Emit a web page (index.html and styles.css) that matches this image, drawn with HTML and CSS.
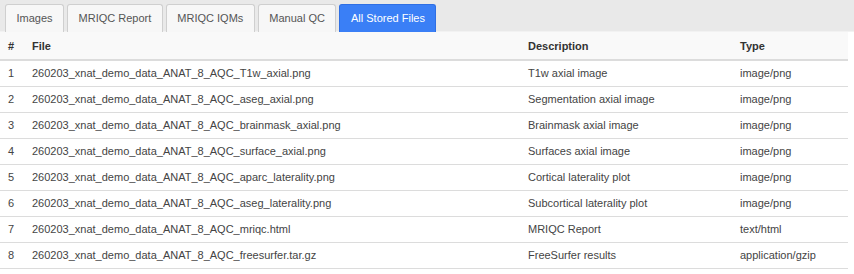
FILE: index.html
```html
<!DOCTYPE html>
<html lang="en">

<head>
    <meta charset="UTF-8">
    <meta name="viewport" content="width=device-width, initial-scale=1.0">
    <title>All Stored Files</title>
    <link rel="stylesheet" href="styles.css">
</head>

<body>

    <div class="tab-bar">
        <div class="tab">Images</div>
        <div class="tab">MRIQC Report</div>
        <div class="tab">MRIQC IQMs</div>
        <div class="tab">Manual QC</div>
        <div class="tab active">All Stored Files</div>
    </div>

    <table class="files-table">
        <colgroup>
            <col class="col-num">
            <col class="col-file">
            <col class="col-desc">
            <col class="col-type">
        </colgroup>
        <thead>
            <tr>
                <th>#</th>
                <th>File</th>
                <th>Description</th>
                <th>Type</th>
            </tr>
        </thead>
        <tbody>
            <tr>
                <td>1</td>
                <td>260203_xnat_demo_data_ANAT_8_AQC_T1w_axial.png</td>
                <td>T1w axial image</td>
                <td>image/png</td>
            </tr>
            <tr>
                <td>2</td>
                <td>260203_xnat_demo_data_ANAT_8_AQC_aseg_axial.png</td>
                <td>Segmentation axial image</td>
                <td>image/png</td>
            </tr>
            <tr>
                <td>3</td>
                <td>260203_xnat_demo_data_ANAT_8_AQC_brainmask_axial.png</td>
                <td>Brainmask axial image</td>
                <td>image/png</td>
            </tr>
            <tr>
                <td>4</td>
                <td>260203_xnat_demo_data_ANAT_8_AQC_surface_axial.png</td>
                <td>Surfaces axial image</td>
                <td>image/png</td>
            </tr>
            <tr>
                <td>5</td>
                <td>260203_xnat_demo_data_ANAT_8_AQC_aparc_laterality.png</td>
                <td>Cortical laterality plot</td>
                <td>image/png</td>
            </tr>
            <tr>
                <td>6</td>
                <td>260203_xnat_demo_data_ANAT_8_AQC_aseg_laterality.png</td>
                <td>Subcortical laterality plot</td>
                <td>image/png</td>
            </tr>
            <tr>
                <td>7</td>
                <td>260203_xnat_demo_data_ANAT_8_AQC_mriqc.html</td>
                <td>MRIQC Report</td>
                <td>text/html</td>
            </tr>
            <tr>
                <td>8</td>
                <td>260203_xnat_demo_data_ANAT_8_AQC_freesurfer.tar.gz</td>
                <td>FreeSurfer results</td>
                <td>application/gzip</td>
            </tr>
        </tbody>
    </table>

</body>

</html>
```

FILE: styles.css
```css
/* Basic reset */
* {
    margin: 0;
    padding: 0;
    box-sizing: border-box;
}

body {
    font-family: "Liberation Sans", Arial, sans-serif;
    font-size: 11px;
    color: #333;
    background-color: white;
}

/* Tabs */
.tab-bar {
    display: flex;
    gap: 3px;
    height: 32px;
    padding: 4px 5px 0;
    background-color: #e9e9e9;
    border-bottom: 1px solid #f2f2f2;
}

.tab {
    height: 28px;
    line-height: 27px;
    padding: 0 10.5px;
    background-color: #f7f7f7;
    border: 1px solid #cfcfcf;
    border-bottom: none;
    border-radius: 3px 3px 0 0;
    color: #555;
}

.tab.active {
    background-color: #3a7ff6;
    border-color: #2f6fe4;
    color: white;
}

/* Files table */
.files-table {
    width: 848px;
    border-collapse: collapse;
    table-layout: fixed;
}

.col-num {
    width: 24px;
}

.col-file {
    width: 496px;
}

.col-desc {
    width: 212px;
}

.files-table th {
    height: 28px;
    padding: 1px 8px 0;
    text-align: left;
    font-weight: bold;
    color: #333;
    background-color: #f9f9f9;
    border-bottom: 2px solid #dcdcdc;
}

.files-table td {
    height: 26px;
    padding: 0 8px;
    color: #444;
    border-bottom: 1px solid #dcdcdc;
    white-space: nowrap;
}
```
